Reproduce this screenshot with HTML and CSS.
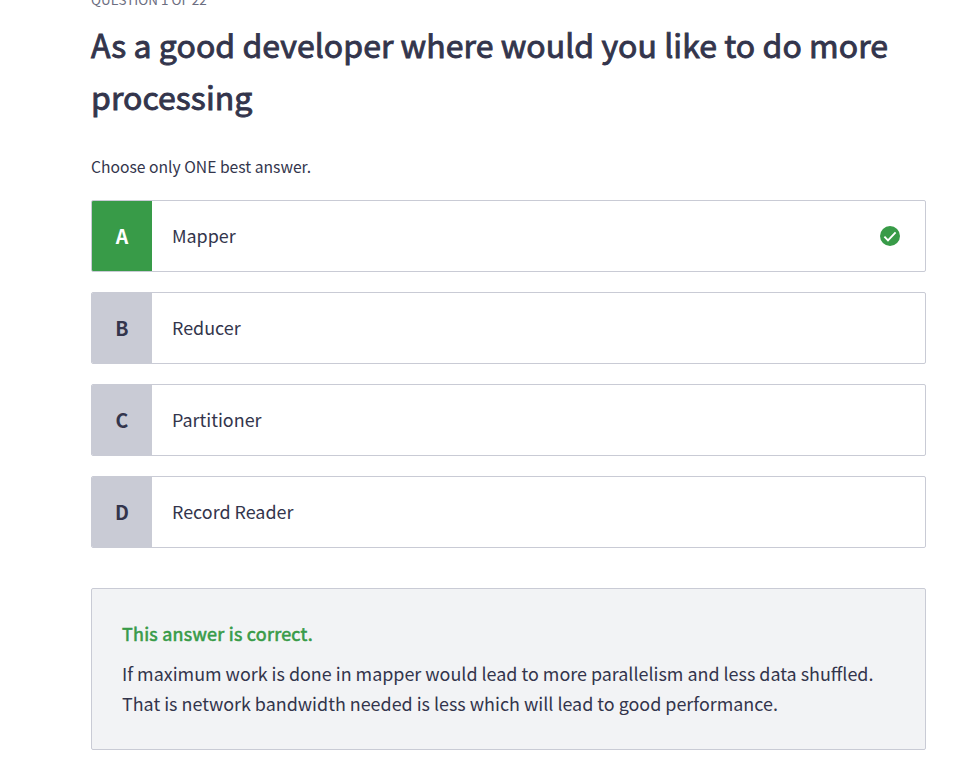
FILE: index.html
```html
<!DOCTYPE html>
<html lang="en">
<head>
<meta charset="utf-8">
<title>Question 1 of 22</title>
<link rel="stylesheet" href="styles.css">
</head>
<body>
<main class="quiz">
  <p class="counter">QUESTION 1 OF 22</p>
  <h1 class="title">As a good developer where would you like to do more<br>processing</h1>
  <p class="hint">Choose only ONE best answer.</p>
  <ul class="options">
    <li class="option option-correct">
      <span class="letter">A</span><span class="label">Mapper</span>
      <svg class="check" viewBox="0 0 20 20" width="20" height="20"><circle cx="10" cy="10" r="10"/><path d="M4.4 10.6l3.6 3.7 7.6-7.9"/></svg>
    </li>
    <li class="option"><span class="letter">B</span><span class="label">Reducer</span></li>
    <li class="option"><span class="letter">C</span><span class="label">Partitioner</span></li>
    <li class="option"><span class="letter">D</span><span class="label">Record Reader</span></li>
  </ul>
  <section class="result">
    <h2 class="verdict">This answer is correct.</h2>
    <p class="explanation">If maximum work is done in mapper would lead to more parallelism and less data shuffled.<br>That is network bandwidth needed is less which will lead to good performance.</p>
  </section>
</main>
</body>
</html>
```
FILE: styles.css
```css
* { box-sizing: border-box; margin: 0; padding: 0; }
html, body { height: 757px; overflow: hidden; }
body {
  background: #fff;
  color: #33354c;
  font-family: "Source Sans Pro", "Noto Sans CJK SC", sans-serif;
}
.quiz { width: 835px; margin-left: 91px; }
.counter { height: 20px; margin-top: -11px; line-height: 20px; font-size: 13.44px; color: #6b6d80; }
.title { margin-top: 9px; font-size: 32px; line-height: 52px; font-weight: 400; letter-spacing: 0.05px; -webkit-text-stroke: 0.9px; white-space: nowrap; }
.hint { margin-top: 33px; font-size: 15.68px; line-height: 24px; }
.options { list-style: none; margin-top: 21px; display: grid; gap: 20px; }
.option { display: flex; align-items: center; height: 72px; border: 1px solid #c9cbd5; border-radius: 2px; overflow: hidden; }
.letter { width: 60px; height: 100%; line-height: 70px; text-align: center; background: #c9cbd5; font-size: 19.5px; font-weight: 700; }
.label { flex: 1; padding: 0 0 2px 20px; font-size: 17.92px; line-height: 30px; }
.option-correct .letter { background: #389b48; color: #fff; }
.check { margin-right: 25px; }
.check circle { fill: #389b48; }
.check path { fill: none; stroke: #fff; stroke-width: 1.9; }
.result { margin-top: 40px; height: 162px; padding: 29px 30px; border: 1px solid #c9cbd5; border-radius: 2px; background: #f2f3f5; }
.verdict { font-size: 17.92px; line-height: 30px; font-weight: 400; letter-spacing: 0.27px; -webkit-text-stroke: 0.6px; color: #389b48; }
.explanation { margin-top: 10px; font-size: 17.92px; line-height: 30px; white-space: nowrap; }
```
